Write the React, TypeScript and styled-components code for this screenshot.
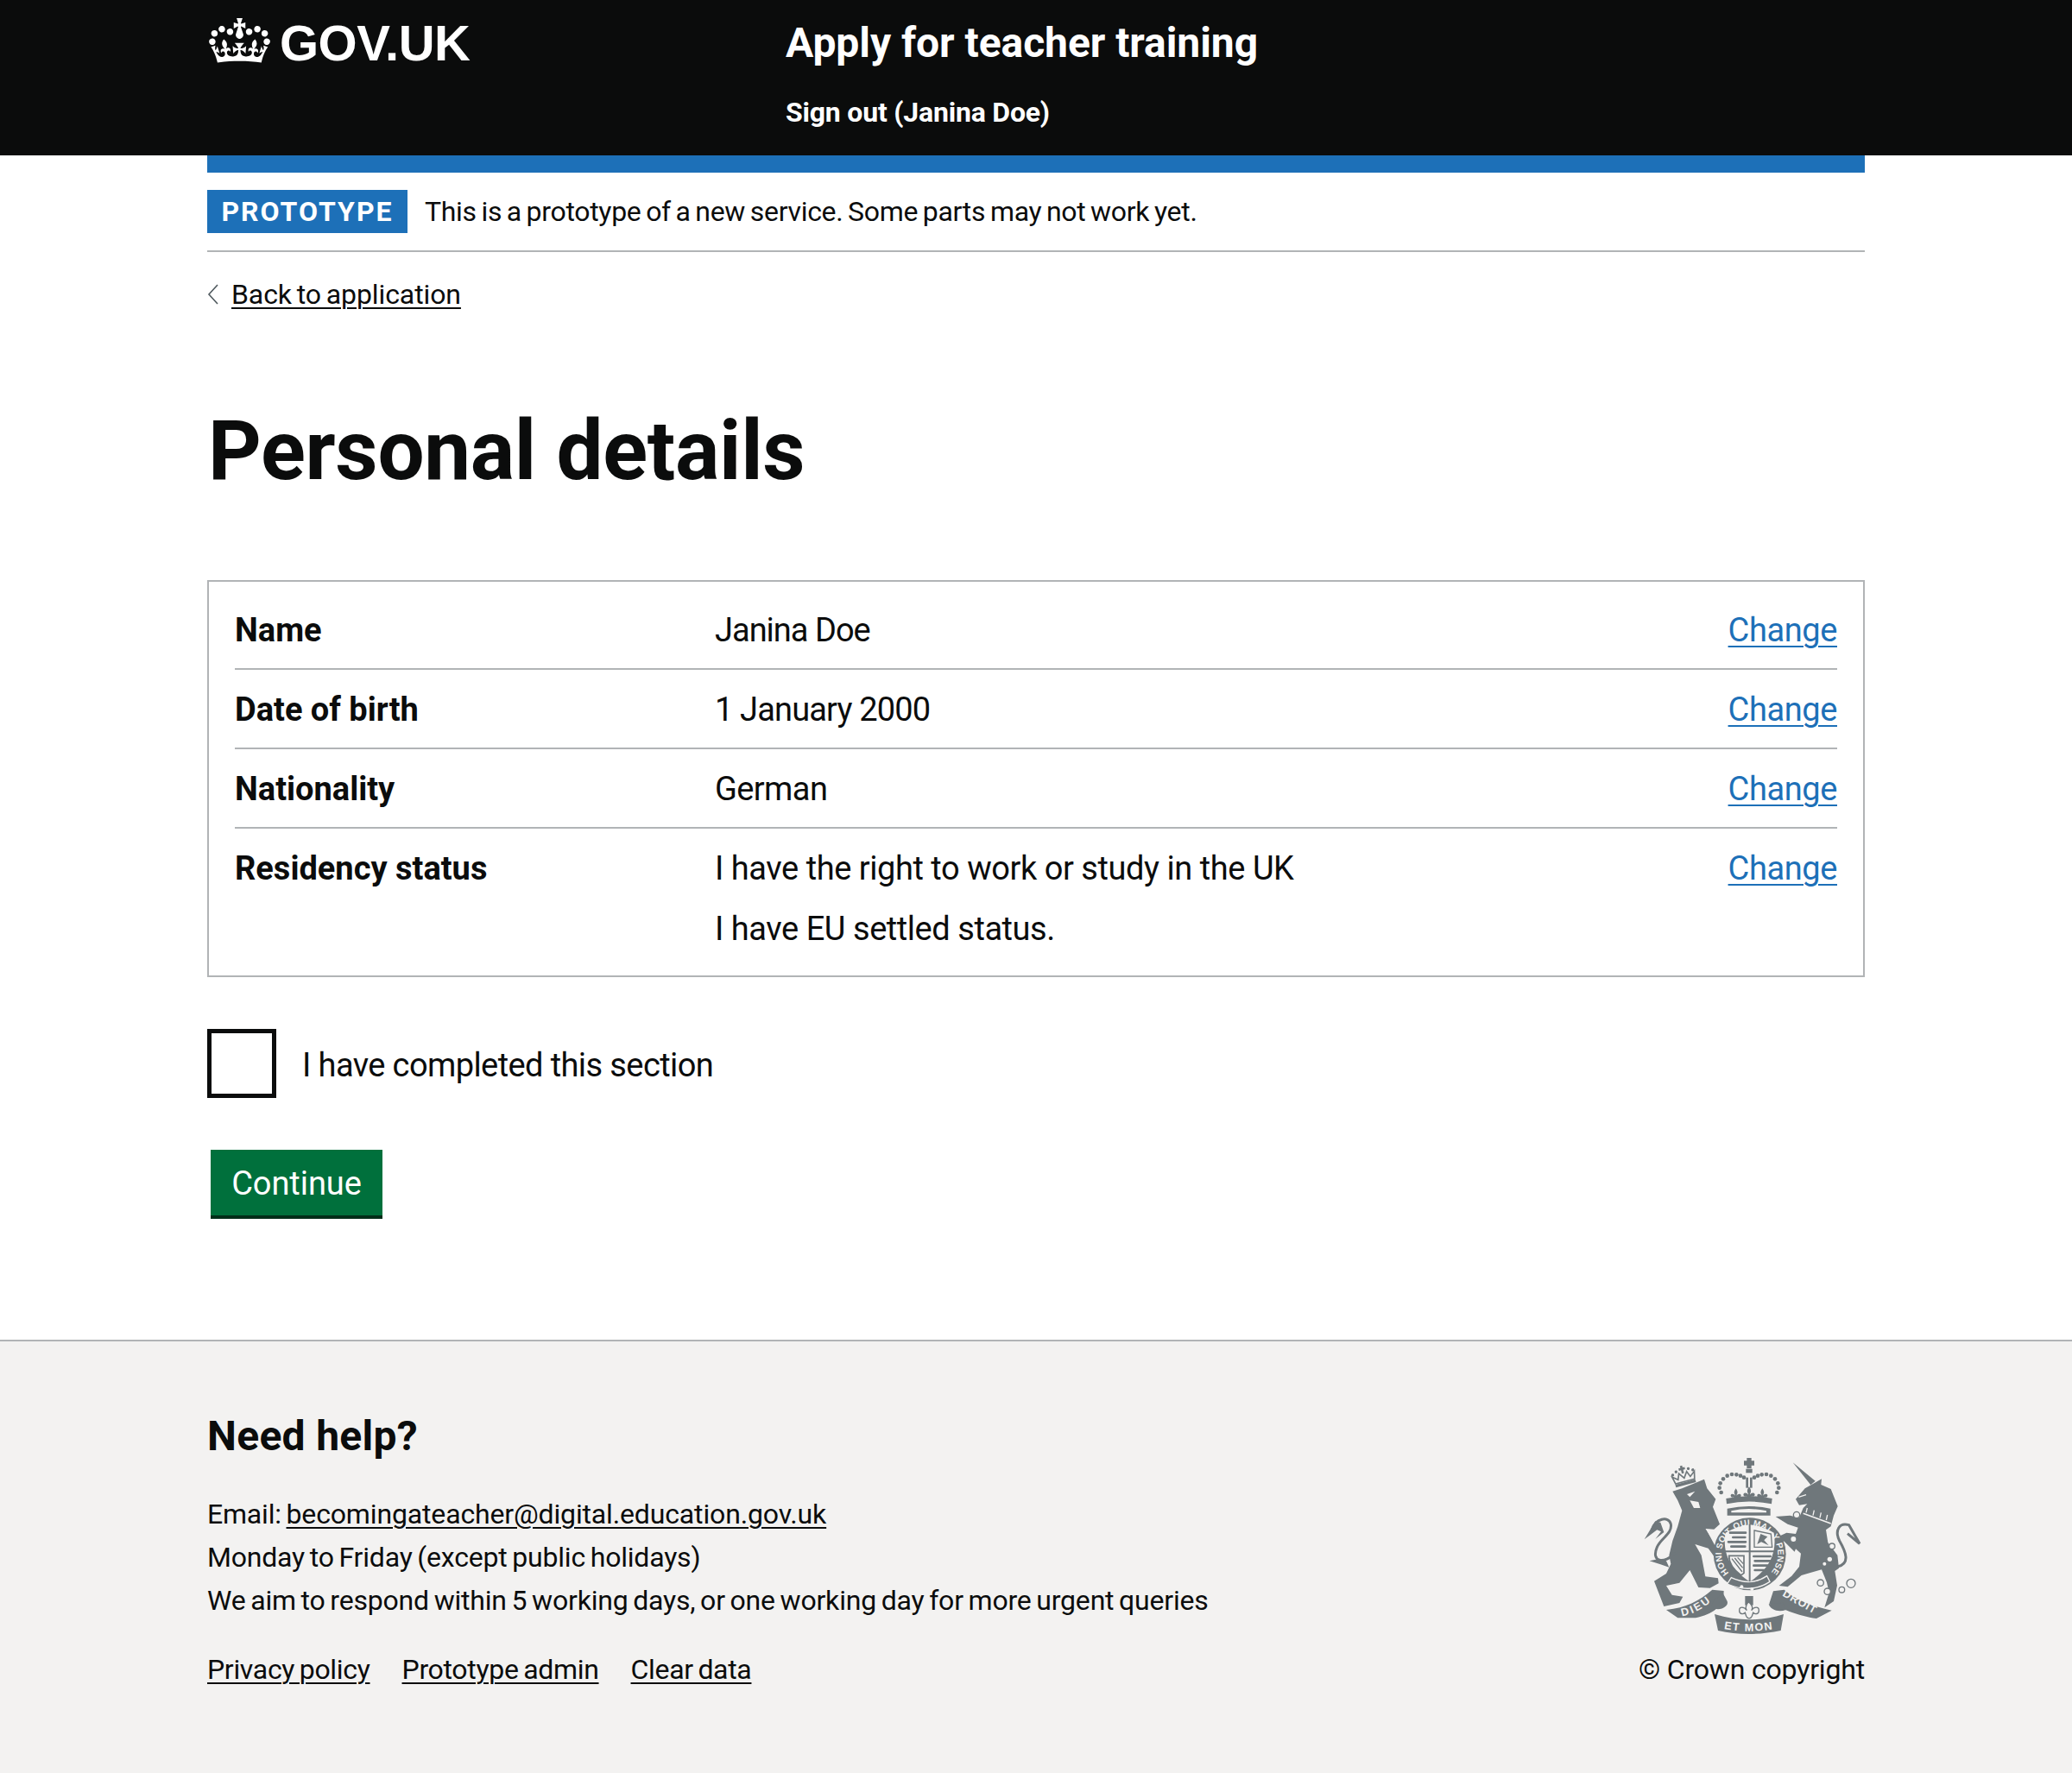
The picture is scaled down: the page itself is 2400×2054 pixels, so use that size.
import React from "react";
import styled, { createGlobalStyle } from "styled-components";

const FONT = `Roboto, "Noto Sans", "Liberation Sans", Arial, sans-serif`;

const Global = createGlobalStyle`
  html, body { margin: 0; padding: 0; background: #fff; }
  body { font-family: ${FONT}; color: #0b0c0c; }
  * { box-sizing: border-box; }
`;

const Page = styled.div`
  display: flex;
  flex-direction: column;
  min-height: 2054px;
`;

const Container = styled.div`
  width: 1920px;
  margin: 0 auto;
`;

const HeaderBar = styled.header`
  background: #0b0c0c;
  height: 180px;
  color: #fff;
`;

const HeaderInner = styled(Container)`
  display: flex;
  padding-top: 21px;
`;

const LogoCol = styled.div`
  width: 670px;
  padding-left: 2px;
  display: flex;
  align-items: flex-start;
  gap: 11px;
`;

const LogoText = styled.span`
  font-family: "Liberation Sans", Arial, sans-serif;
  font-weight: 700;
  font-size: 58px;
  line-height: 58px;
  letter-spacing: -0.5px;
`;

const ServiceCol = styled.div`
  display: flex;
  flex-direction: column;
`;

const ServiceName = styled.div`
  font-weight: 700;
  font-size: 48px;
  line-height: 58px;
  letter-spacing: -0.06px;
`;

const SignOut = styled.div`
  font-weight: 700;
  font-size: 32px;
  line-height: 40px;
  letter-spacing: -0.2px;
  margin-top: 31px;
`;

const PhaseBand = styled(Container)`
  border-top: 20px solid #1d70b8;
  border-bottom: 2px solid #b1b4b6;
  padding: 20px 0;
  height: 112px;
  display: flex;
  align-items: center;
  gap: 20px;
`;

const PhaseTag = styled.strong`
  background: #1d70b8;
  color: #fff;
  width: 232px;
  height: 50px;
  display: flex;
  align-items: center;
  justify-content: center;
  font-size: 32px;
  font-weight: 700;
  letter-spacing: 2px;
`;

const PhaseText = styled.span`
  font-size: 32px;
  line-height: 50px;
  letter-spacing: -0.3px;
  word-spacing: -2px;
`;

const BackRow = styled.div`
  display: flex;
  align-items: center;
  gap: 12px;
  margin-top: 24px;
  height: 50px;
`;

const TextLink = styled.a`
  color: #0b0c0c;
  font-size: 32px;
  line-height: 50px;
  letter-spacing: -0.32px;
  word-spacing: -2px;
  text-decoration: underline;
  text-decoration-thickness: 2px;
  text-underline-offset: 4px;
`;

const BackLink = styled(TextLink)`
  letter-spacing: -0.1px;
`;

const EmailLink = styled(TextLink)`
  letter-spacing: -0.15px;
`;

const Title = styled.h1`
  font-size: 96px;
  line-height: 100px;
  font-weight: 700;
  letter-spacing: -0.3px;
  margin: 106px 0 100px;
  padding-left: 1px;
`;

const SummaryCard = styled.div`
  border: 2px solid #b1b4b6;
  padding: 10px 30px 29px;
`;

const Row = styled.div<{ $last?: boolean }>`
  display: grid;
  grid-template-columns: 556px 1fr auto;
  padding: 21px 0 ${(p) => (p.$last ? 0 : 19)}px;
  border-bottom: ${(p) => (p.$last ? "0" : "2px solid #b1b4b6")};
`;

const Key = styled.div`
  font-size: 38px;
  line-height: 50px;
  font-weight: 700;
`;

const Value = styled.div<{ $spacing: number }>`
  font-size: 38px;
  line-height: 50px;
  letter-spacing: ${(p) => p.$spacing}px;
  & + & {
    margin-top: 20px;
  }
`;

const ChangeLink = styled.a`
  color: #1d70b8;
  font-size: 38px;
  line-height: 50px;
  letter-spacing: -0.4px;
  text-decoration: underline;
  text-decoration-thickness: 2px;
  text-underline-offset: 5px;
`;

const CheckRow = styled.label`
  display: flex;
  align-items: center;
  gap: 30px;
  margin-top: 60px;
`;

const CheckBox = styled.span`
  width: 80px;
  height: 80px;
  border: 5px solid #0b0c0c;
  background: #fff;
  display: block;
`;

const CheckLabel = styled.span`
  font-size: 38px;
  line-height: 50px;
  letter-spacing: -0.6px;
  padding-top: 3px;
`;

const ContinueButton = styled.button`
  display: block;
  margin: 60px 0 0 4px;
  width: 199px;
  height: 76px;
  border: 0;
  padding: 2px 0 0;
  background: #00703c;
  color: #fff;
  font-family: ${FONT};
  font-size: 38px;
  letter-spacing: -0.05px;
  box-shadow: 0 4px 0 #002d18;
`;

const Main = styled.main`
  flex: 1;
`;

const Footer = styled.footer`
  background: #f3f2f1;
  border-top: 2px solid #b1b4b6;
  height: 502px;
  padding-top: 80px;
`;

const FooterInner = styled(Container)`
  display: flex;
  justify-content: space-between;
  align-items: flex-end;
`;

const HelpHeading = styled.h2`
  font-size: 48px;
  line-height: 60px;
  font-weight: 700;
  letter-spacing: 0.3px;
  margin: 0 0 35px;
`;

const HelpLine = styled.div`
  font-size: 32px;
  line-height: 50px;
  letter-spacing: -0.2px;
  word-spacing: -2px;
`;

const FooterLinks = styled.div`
  display: flex;
  gap: 37px;
  margin-top: 30px;
`;

const Meta = styled.div`
  display: flex;
  flex-direction: column;
  align-items: flex-end;
`;

const Copyright = styled.div`
  font-size: 32px;
  line-height: 50px;
  letter-spacing: -0.18px;
  margin-top: 14px;
`;

const Crown = () => (
  <svg width="71" height="52" viewBox="0 0 132 97" aria-hidden="true" style={{ flex: "none" }}>
    <path
      fill="currentColor"
      fillRule="evenodd"
      d="M25 30.2c3.5 1.5 7.7-.2 9.1-3.7 1.5-3.6-.2-7.8-3.9-9.2-3.6-1.4-7.6.3-9.1 3.9-1.4 3.5.3 7.5 3.9 9zM9 39.5c3.6 1.5 7.8-.2 9.2-3.7 1.5-3.6-.2-7.8-3.9-9.1-3.6-1.5-7.6.2-9.1 3.8-1.4 3.5.3 7.5 3.8 9zM4.4 57.2c3.5 1.5 7.7-.2 9.1-3.8 1.5-3.6-.2-7.7-3.9-9.1-3.5-1.5-7.6.3-9.1 3.8-1.4 3.5.3 7.6 3.9 9.1zm38.3-21.4c3.5 1.5 7.7-.2 9.1-3.8 1.5-3.6-.2-7.7-3.9-9.1-3.6-1.5-7.6.3-9.1 3.8-1.3 3.6.4 7.7 3.9 9.1zm64.4-5.6c-3.6 1.5-7.8-.2-9.1-3.7-1.5-3.6.2-7.8 3.8-9.2 3.6-1.4 7.7.3 9.2 3.9 1.3 3.5-.4 7.5-3.9 9zm15.9 9.3c-3.6 1.5-7.7-.2-9.1-3.7-1.5-3.6.2-7.8 3.7-9.1 3.6-1.5 7.7.2 9.2 3.8 1.5 3.5-.3 7.5-3.8 9zm4.7 17.7c-3.6 1.5-7.8-.2-9.2-3.8-1.5-3.6.2-7.7 3.9-9.1 3.6-1.5 7.7.3 9.2 3.8 1.3 3.5-.4 7.6-3.9 9.1zM89.3 35.8c-3.6 1.5-7.8-.2-9.2-3.8-1.4-3.6.2-7.7 3.9-9.1 3.6-1.5 7.7.3 9.2 3.8 1.4 3.6-.3 7.7-3.9 9.1zM69.7 17.7l8.9 4.7V9.3l-8.9 2.8c-.2-.3-.5-.6-.9-.9L72.4 0H59.6l3.5 11.2c-.3.3-.6.5-.9.9l-8.8-2.8v13.1l8.8-4.7c.3.3.6.7.9.9l-5 15.4v.1c-.2.8-.4 1.6-.4 2.4 0 4.1 3.1 7.5 7 8.1h.2c.3 0 .7.1 1 .1.4 0 .7 0 1-.1h.2c4-.6 7.1-4.1 7.1-8.1 0-.8-.1-1.7-.4-2.4V34l-5.1-15.4c.4-.2.7-.6 1-.9zM66 92.8c16.9 0 32.8 1.1 47.1 3.2 4-16.9 8.9-26.7 14-33.5l-9.6-3.4c1 4.9 1.1 7.2 0 10.2-1.5-1.4-3-4.3-4.2-8.7L108.6 76c2.8-2 5-3.2 7.5-3.3-4.4 9.4-10 11.9-13.6 11.2-4.3-.8-6.3-4.6-5.6-7.9 1-4.7 5.7-5.9 8-.5 4.3-8.7-3-11.4-7.6-8.8 7.1-7.2 7.9-13.5 2.1-21.1-8 6.1-8.1 12.3-4.5 20.8-4.7-5.4-12.1-2.5-9.5 6.2 3.4-5.2 7.9-2 7.2 3.1-.6 4.3-6.4 7.8-13.5 7.2-10.3-.9-10.9-8-11.2-13.8 2.5-.5 7.1 1.8 11 7.3L80.2 60c-4.1 4.4-8 5.3-12.3 5.4 1.4-4.4 8-11.6 8-11.6H55.5s6.4 7.2 7.9 11.6c-4.2-.1-8-1-12.3-5.4l1.4 16.4c3.9-5.5 8.5-7.7 10.9-7.3-.3 5.8-.9 12.8-11.1 13.8-7.2.6-12.9-2.9-13.5-7.2-.7-5 3.8-8.3 7.1-3.1 2.7-8.7-4.6-11.6-9.4-6.2 3.7-8.5 3.6-14.7-4.6-20.8-5.8 7.6-5 13.9 2.2 21.1-4.7-2.6-11.9.1-7.7 8.8 2.3-5.5 7.1-4.2 8.1.5.7 3.3-1.3 7.1-5.7 7.9-3.5.7-9-1.8-13.5-11.2 2.5.1 4.7 1.3 7.5 3.3l-4.7-15.4c-1.2 4.4-2.7 7.2-4.3 8.7-1.1-3-.9-5.3 0-10.2l-9.5 3.4c5 6.9 9.9 16.7 14 33.5 14.8-2.1 30.8-3.2 47.7-3.2z"
    />
  </svg>
);

const BackChevron = () => (
  <svg width="16" height="26" viewBox="0 0 16 26" aria-hidden="true" style={{ flex: "none" }}>
    <path d="M12 2 L2 13 L12 24" fill="none" stroke="#505a5f" strokeWidth="1.6" />
  </svg>
);

const G = "#6f777b";
const BG = "#f3f2f1";

const dots: [number, number][] = [
  [341, 182], [335, 166], [338, 150], [348, 135], [362, 124], [378, 119], [394, 120], [408, 124], [420, 130],
  [535, 182], [541, 166], [538, 150], [528, 135], [514, 124], [498, 119], [482, 120], [468, 124], [456, 130],
];

const Fleur = ({ x, y, s = 1 }: { x: number; y: number; s?: number }) => (
  <path
    transform={`translate(${x} ${y}) scale(${s})`}
    d="M0 -22 C7 -12 7 -6 3 0 L3 3 C6 -3 16 -5 18 2 C19 8 12 12 8 8 L5 14 L14 14 L14 18 L-14 18 L-14 14 L-5 14 L-8 8 C-12 12 -19 8 -18 2 C-16 -5 -6 -3 -3 3 L-3 0 C-7 -6 -7 -12 0 -22 Z"
    fill={G}
  />
);

const Quarter = ({ d }: { d: string }) => <path d={d} fill="none" stroke={G} strokeWidth="8" strokeLinecap="round" />;

const ARMS_FONT = '"Liberation Sans", Arial, sans-serif';

const Arms = () => (
  <svg width="260" height="210" viewBox="60 50 780 630" role="img" aria-label="Royal coat of arms">
    <defs>
      <path id="garterRing" d="M368 462 A98 98 0 1 1 510 464" />
      <path id="mottoLeft" d="M205 612 Q270 600 322 545" />
      <path id="mottoMid" d="M350 656 Q435 672 525 656" />
      <path id="mottoRight" d="M552 540 Q610 575 680 612" />
    </defs>

    {/* small crown on the lion */}
    <g transform="rotate(-15 212 130)">
      <rect x="176" y="146" width="72" height="10" fill={G} />
      <path d="M178 144 L172 118 L190 132 L198 112 L212 132 L226 112 L234 132 L252 118 L246 144 Z" fill="none" stroke={G} strokeWidth="5" />
      <path d="M208 88 h8 v7 h7 v8 h-7 v12 h-8 v-12 h-7 v-8 h7 Z" fill={G} />
      <circle cx="176" cy="112" r="5" fill={G} />
      <circle cx="190" cy="104" r="5" fill={G} />
      <circle cx="234" cy="104" r="5" fill={G} />
      <circle cx="248" cy="112" r="5" fill={G} />
    </g>

    {/* lion */}
    <path
      fill={G}
      d="M172 178 L205 168 L282 136 L292 168 L322 205 L312 232 L336 292 L316 310 L288 308 L322 372 L344 396 L336 416 L316 404 L296 376 L250 362 L272 400 L286 474 L330 480 L332 498 L302 514 L262 512 L232 452 L196 496 L150 506 L170 538 L208 544 L196 566 L142 578 L108 490 L150 464 L166 430 L160 400 L172 350 L190 300 L205 245 L190 210 Z"
    />
    <path fill={BG} d="M222 188 L250 178 L232 198 Z M232 210 L262 215 L268 236 L246 236 Z" />
    <path d="M288 308 L338 388" stroke={BG} strokeWidth="3" />
    <path d="M182 392 C142 432 96 424 118 372 C132 340 172 325 166 292 C158 262 112 272 100 312" fill="none" stroke={G} strokeWidth="9" />
    <path fill={G} d="M112 282 L74 345 L118 312 L132 318 L112 344 L142 320 L130 286 Z" />
    <path fill={G} d="M92 420 L130 432 L160 442 L150 420 L120 414 Z" />

    {/* unicorn */}
    <path fill={G} d="M590 78 L668 142 L652 156 Z" />
    <path
      fill={G}
      d="M600 205 L632 168 L660 152 L690 135 L688 155 L722 170 L746 230 L732 262 L722 300 L705 312 L712 356 L745 400 L750 445 L736 455 L744 505 L732 560 L700 582 L716 530 L708 495 L690 450 L648 462 L620 470 L572 510 L542 506 L586 472 L612 440 L618 394 L600 378 L596 388 L560 352 L530 340 L568 322 L600 326 L608 304 L572 292 L530 266 L580 262 L612 270 L626 236 L640 222 L612 226 L600 205 Z"
    />
    <path d="M610 198 L636 190" stroke={BG} strokeWidth="4" />
    <path d="M626 255 L722 290" stroke={BG} strokeWidth="5" />
    <path d="M636 252 L640 236 M660 262 L664 244 M684 270 L688 252 M706 278 L710 260" stroke={BG} strokeWidth="4" />
    <path d="M745 440 C790 430 775 390 752 350 C735 315 750 285 785 295 L822 360 L780 325" fill="none" stroke={G} strokeWidth="9" />
    <circle cx="603" cy="260" r="11" fill={BG} stroke={G} strokeWidth="4" />
    <circle cx="592" cy="344" r="11" fill={BG} stroke={G} strokeWidth="4" />
    <circle cx="726" cy="369" r="10" fill={BG} stroke={G} strokeWidth="4" />
    <circle cx="718" cy="414" r="8" fill={BG} />
    <circle cx="700" cy="430" r="6" fill={BG} />
    <circle cx="686" cy="496" r="11" fill={BG} stroke={G} strokeWidth="4" />
    <circle cx="710" cy="526" r="11" fill={BG} stroke={G} strokeWidth="4" />
    <circle cx="760" cy="520" r="10" fill={BG} stroke={G} strokeWidth="4" />
    <circle cx="792" cy="498" r="15" fill={BG} stroke={G} strokeWidth="4" />

    {/* royal crown */}
    <path d="M430 62 h16 v10 h10 v16 h-10 v10 h-16 v-10 h-10 v-16 h10 Z" fill={G} />
    <rect x="427" y="100" width="22" height="14" fill={G} />
    <rect x="427" y="130" width="8" height="36" fill={G} />
    <rect x="441" y="130" width="8" height="36" fill={G} />
    {dots.map(([cx, cy]) => (
      <circle key={`${cx}-${cy}`} cx={cx} cy={cy} r={7} fill={G} />
    ))}
    <Fleur x={392} y={190} s={1} />
    <Fleur x={438} y={186} s={1.1} />
    <Fleur x={484} y={190} s={1} />
    <path d="M358 203 Q438 186 518 203 L516 222 Q438 205 360 222 Z" fill={G} />
    <path d="M362 238 Q438 222 512 238 L512 262 L362 262 Z" fill={G} />
    <path d="M376 246 Q438 232 498 246 L498 252 L376 252 Z" fill={BG} />

    {/* garter with its motto */}
    <circle cx="440" cy="396" r="126" fill={G} />
    <text fontFamily={ARMS_FONT} fontWeight="700" fontSize="30" fill={BG}>
      <textPath href="#garterRing" textLength="450" lengthAdjust="spacing">HONI SOIT QUI MAL Y PENSE</textPath>
    </text>
    <path d="M362 500 Q445 535 510 492 L500 472 Q445 510 376 478 Z" fill={G} stroke={BG} strokeWidth="4" />
    <circle cx="412" cy="510" r="6" fill={BG} />
    <circle cx="448" cy="518" r="6" fill={BG} />

    {/* shield */}
    <path d="M356 322 Q400 298 440 294 Q480 298 524 322 C534 382 518 442 440 492 C362 442 346 382 356 322 Z" fill={BG} />
    <path d="M437 292 h6 v200 h-6 Z M348 384 H532 V390 H348 Z" fill={G} />
    <Quarter d="M372 322 H426 M382 338 H424 M366 354 H426 M376 370 H424" />
    <path d="M456 314 L514 326 L518 372 L456 372 Z" fill="none" stroke={G} strokeWidth="4" />
    <path d="M466 362 L478 326 L502 336 L490 348 L506 366 L480 354 Z" fill={G} />
    <path d="M368 402 L420 402 L420 462 L410 470 C382 450 368 430 368 402 Z" fill="none" stroke={G} strokeWidth="5" />
    <path d="M378 412 L414 458 M388 410 L416 444 M398 408 L418 430" stroke={G} strokeWidth="4" />
    <Quarter d="M454 404 H512 M458 420 H510 M454 436 H502 M458 452 H490" />

    {/* motto ribbons */}
    <path d="M150 590 C220 582 262 560 310 520 L350 524 C350 580 310 606 252 618 L190 618 Z" fill={G} />
    <path d="M308 578 C326 600 370 580 362 560 L348 534 C320 552 310 560 308 578 Z" fill={G} />
    <path d="M318 605 C400 630 480 630 558 605 L548 662 C470 678 400 678 330 662 Z" fill={G} />
    <path d="M522 525 L560 520 C600 555 650 575 725 592 L672 620 C610 612 540 580 508 568 Z" fill={G} />
    <path d="M506 570 C512 590 540 600 566 590 L556 565 Z" fill={G} />
    <text fontFamily={ARMS_FONT} fontWeight="700" fontSize="38" fill={BG}>
      <textPath href="#mottoLeft" textLength="112" lengthAdjust="spacing">DIEU</textPath>
    </text>
    <text fontFamily={ARMS_FONT} fontWeight="700" fontSize="38" fill={BG}>
      <textPath href="#mottoMid" textLength="170" lengthAdjust="spacing">ET MON</textPath>
    </text>
    <text fontFamily={ARMS_FONT} fontWeight="700" fontSize="38" fill={BG}>
      <textPath href="#mottoRight" textLength="128" lengthAdjust="spacing">DROIT</textPath>
    </text>

    {/* fleur between the ribbons */}
    <rect x="424" y="542" width="28" height="32" fill={G} />
    <path d="M436 562 C452 576 452 584 446 592 C456 578 472 578 472 592 C472 606 458 606 452 600 L448 612 C444 622 432 622 428 612 L424 600 C418 606 404 606 404 592 C404 578 420 578 430 592 C424 584 424 576 436 562 Z" fill={BG} stroke={G} strokeWidth="4" />
  </svg>
);

const rows = [
  { key: "Name", spacing: -1, values: ["Janina Doe"] },
  { key: "Date of birth", spacing: -0.85, values: ["1 January 2000"] },
  { key: "Nationality", spacing: -0.6, values: ["German"] },
  { key: "Residency status", spacing: -0.45, values: ["I have the right to work or study in the UK", "I have EU settled status."] },
];

export default function App() {
  return (
    <Page>
      <Global />
      <HeaderBar>
        <HeaderInner>
          <LogoCol>
            <Crown />
            <LogoText>GOV.UK</LogoText>
          </LogoCol>
          <ServiceCol>
            <ServiceName>Apply for teacher training</ServiceName>
            <SignOut>Sign out (Janina Doe)</SignOut>
          </ServiceCol>
        </HeaderInner>
      </HeaderBar>
      <Main>
        <PhaseBand>
          <PhaseTag>PROTOTYPE</PhaseTag>
          <PhaseText>This is a prototype of a new service. Some parts may not work yet.</PhaseText>
        </PhaseBand>
        <Container>
          <BackRow>
            <BackChevron />
            <BackLink href="#">Back to application</BackLink>
          </BackRow>
          <Title>Personal details</Title>
          <SummaryCard>
            {rows.map((r, i) => (
              <Row key={r.key} $last={i === rows.length - 1}>
                <Key>{r.key}</Key>
                <div>
                  {r.values.map((v) => (
                    <Value key={v} $spacing={r.spacing}>{v}</Value>
                  ))}
                </div>
                <ChangeLink href="#">Change</ChangeLink>
              </Row>
            ))}
          </SummaryCard>
          <CheckRow>
            <CheckBox />
            <CheckLabel>I have completed this section</CheckLabel>
          </CheckRow>
          <ContinueButton>Continue</ContinueButton>
        </Container>
      </Main>
      <Footer>
        <FooterInner>
          <div>
            <HelpHeading>Need help?</HelpHeading>
            <HelpLine>
              Email: <EmailLink href="#">becomingateacher@digital.education.gov.uk</EmailLink>
            </HelpLine>
            <HelpLine>Monday to Friday (except public holidays)</HelpLine>
            <HelpLine>We aim to respond within 5 working days, or one working day for more urgent queries</HelpLine>
            <FooterLinks>
              <TextLink href="#">Privacy policy</TextLink>
              <TextLink href="#">Prototype admin</TextLink>
              <TextLink href="#">Clear data</TextLink>
            </FooterLinks>
          </div>
          <Meta>
            <Arms />
            <Copyright>© Crown copyright</Copyright>
          </Meta>
        </FooterInner>
      </Footer>
    </Page>
  );
}
